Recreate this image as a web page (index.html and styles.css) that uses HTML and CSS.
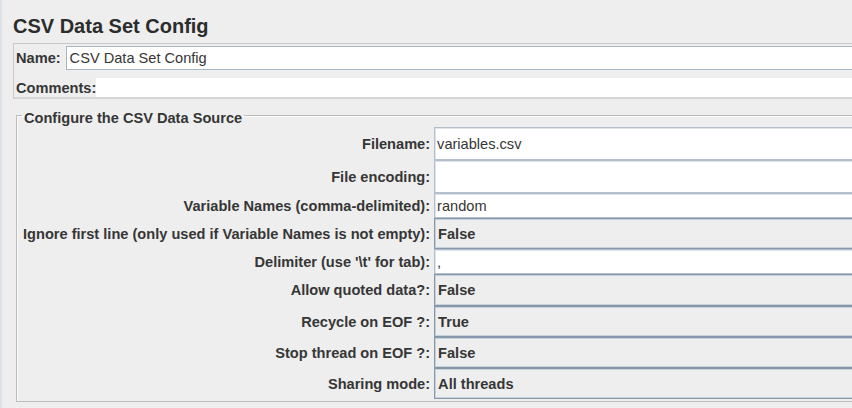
FILE: index.html
```html
<!DOCTYPE html>
<html lang="en">
<head>
<meta charset="utf-8">
<title>CSV Data Set Config</title>
<link rel="stylesheet" href="styles.css">
</head>
<body>
<div class="page">
  <h1 class="title">CSV Data Set Config</h1>
  <div class="name-panel">
    <div class="name-row">
      <span class="lbl">Name:</span>
      <div class="text-input">CSV Data Set Config</div>
    </div>
    <div class="comments-row">
      <span class="lbl">Comments:</span>
      <div class="comments-area"></div>
    </div>
  </div>
  <fieldset class="source">
    <legend>Configure the CSV Data Source</legend>
    <div class="grid">
      <div class="flabel">Filename:</div>
      <div class="field text">variables.csv</div>
      <div class="flabel">File encoding:</div>
      <div class="field text"></div>
      <div class="flabel">Variable Names (comma-delimited):</div>
      <div class="field text">random</div>
      <div class="flabel">Ignore first line (only used if Variable Names is not empty):</div>
      <div class="field combo">False</div>
      <div class="flabel">Delimiter (use '\t' for tab):</div>
      <div class="field text">,</div>
      <div class="flabel">Allow quoted data?:</div>
      <div class="field combo">False</div>
      <div class="flabel">Recycle on EOF ?:</div>
      <div class="field combo">True</div>
      <div class="flabel">Stop thread on EOF ?:</div>
      <div class="field combo">False</div>
      <div class="flabel">Sharing mode:</div>
      <div class="field combo">All threads</div>
    </div>
  </fieldset>
</div>
</body>
</html>
```
FILE: styles.css
```css
html, body {
  margin: 0;
  background: #eeeeee;
  overflow: hidden;
}
body {
  font-family: "Liberation Sans", Arial, sans-serif;
  font-size: 14.6px;
  color: #363636;
  height: 408px;
  box-shadow: inset 2px 0 0 #dde2e8;
}
.page {
  box-sizing: border-box;
  width: 852px;
  padding-left: 13px;
}
.title {
  margin: 16px 0 7px;
  font-size: 20px;
  line-height: 20px;
  font-weight: bold;
  color: #2c2c2c;
}
.name-panel {
  border: 1px solid #c9c9c9;
  border-right: none;
  border-bottom: 2px solid #d6d6d6;
  padding: 2px 0 0 2px;
}
.name-row {
  display: flex;
  align-items: center;
  gap: 5px;
  height: 24px;
}
.lbl {
  font-weight: bold;
}
.text-input {
  flex: 1;
  height: 24px;
  box-sizing: border-box;
  border: 1px solid #a9b6c4;
  border-right: none;
  background: #fff;
  padding-left: 3px;
  display: flex;
  align-items: center;
}
.comments-row {
  display: flex;
  align-items: center;
  margin-top: 8px;
  height: 19px;
}
.comments-area {
  flex: 1;
  align-self: stretch;
  background: #fff;
}
.source {
  margin: 5px 0 0 3px;
  padding: 1px 0 2px 5px;
  border: 1px solid #bdbdbd;
  border-right: none;
  box-shadow: inset 1px 1px 0 #fafafa;
  min-width: 0;
}
.source legend {
  padding: 6px 2px 0;
  line-height: 16px;
  font-weight: bold;
}
.grid {
  display: grid;
  grid-template-columns: max-content 1fr;
  grid-template-rows: 33px 33px 25px 31px 25px 32px 31px 31px 31px;
  column-gap: 4px;
  padding-left: 1px;
}
.flabel {
  font-weight: bold;
  display: flex;
  align-items: center;
  justify-content: flex-end;
  white-space: nowrap;
}
.field {
  box-sizing: border-box;
  display: flex;
  align-items: center;
  border: 1px solid;
  border-right: none;
  min-width: 0;
}
.field.text {
  background: #fff;
  border-color: #b3bfcc;
  box-shadow: inset 1px 1px 0 #dfe4ea;
  padding-left: 2px;
}
.field.combo {
  background: #eeeeee;
  border-color: #8697aa;
  box-shadow: inset 1px 1px 0 #c8d2dd, inset 0 -1px 0 #c8d2dd;
  padding-left: 3px;
  font-weight: bold;
}
```
